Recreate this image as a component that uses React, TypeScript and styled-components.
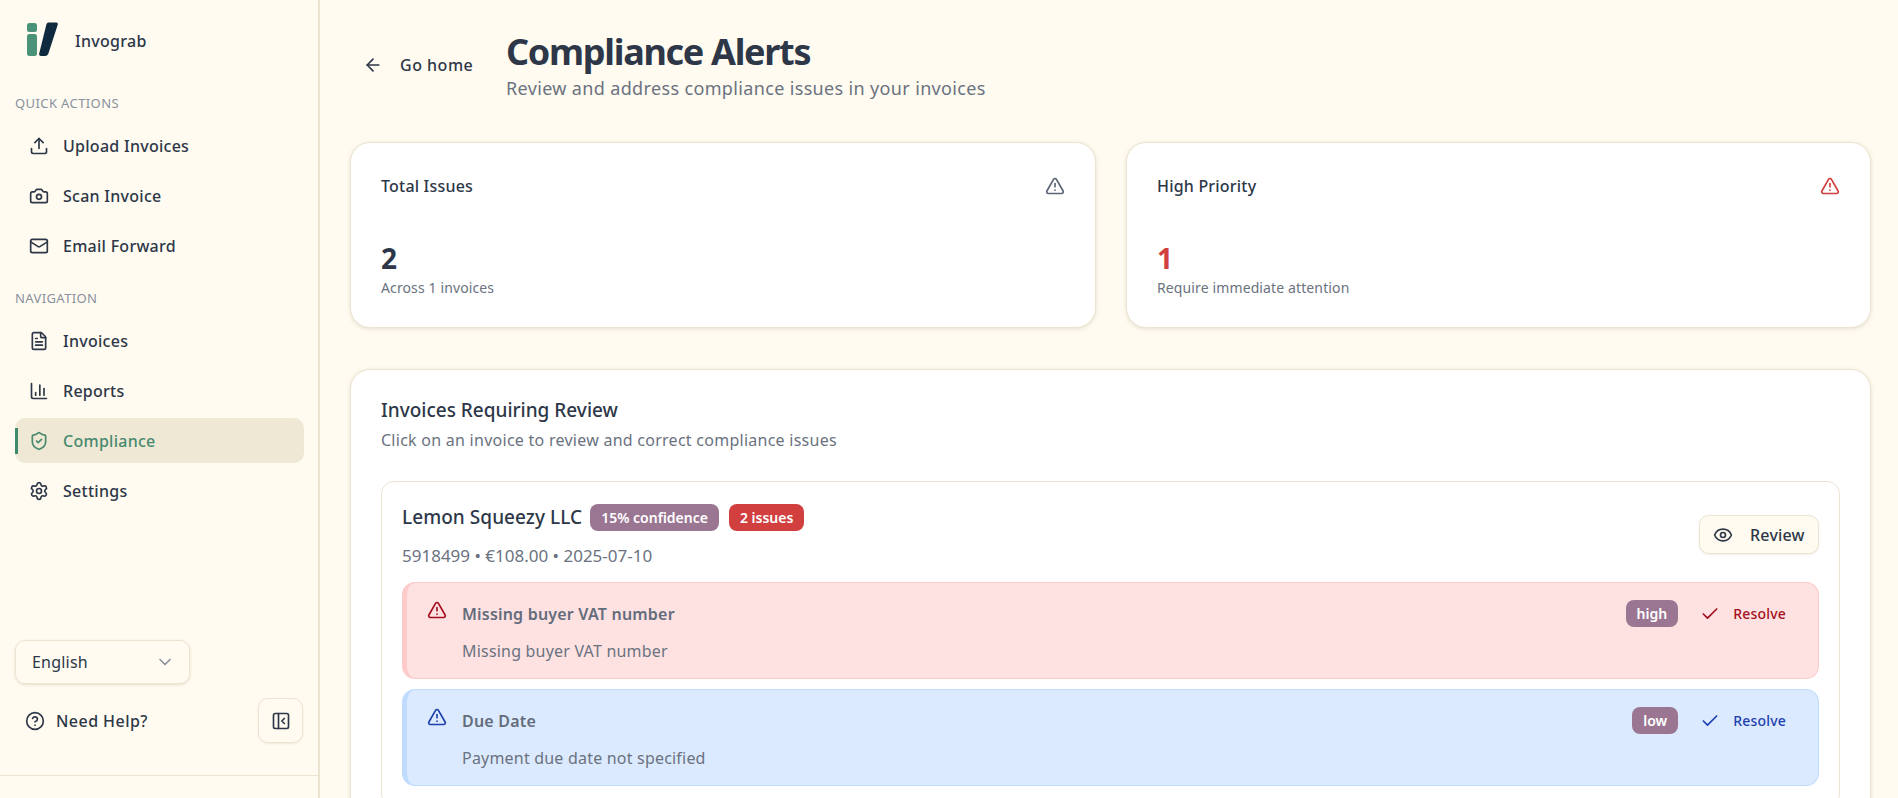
import React from "react";
import styled, { createGlobalStyle } from "styled-components";
import {
  Upload, Camera, Mail, FileText, ChartColumn, ShieldCheck, Settings, ChevronDown,
  CircleHelp, PanelLeftClose, ArrowLeft, TriangleAlert, Eye, Check,
} from "lucide-react";

const Global = createGlobalStyle`
  html, body { margin: 0; padding: 0; height: 100%; overflow: hidden; }
  body { background: #fffbf0; color: #2d3748; font-family: "Noto Sans", "Open Sans", sans-serif; letter-spacing: 0.2px; }
  * { box-sizing: border-box; }
  button { font-family: inherit; letter-spacing: inherit; }
`;

const Page = styled.div`display: flex; height: 798px; overflow: hidden;`;

const Sidebar = styled.aside`
  width: 320px; flex: none; height: 798px; display: flex; flex-direction: column;
  border-right: 2px solid #ebe4d0;
`;
const Brand = styled.div`display: flex; gap: 16px; padding: 22px 0 0 27px; height: 94px; align-items: flex-start;`;
const BrandName = styled.span`font-size: 16px; font-weight: 500; line-height: 38px; letter-spacing: 0.3px;`;
const GroupLabel = styled.div`
  font-size: 13px; line-height: 18px; letter-spacing: 0.4px; color: #8a919e; text-transform: uppercase; padding-left: 15px; margin-bottom: 11px;
`;
const NavList = styled.nav`display: flex; flex-direction: column; gap: 5px; padding: 0 15px; margin-bottom: 21px;`;
const NavItem = styled.a<{ $active?: boolean }>`
  position: relative; height: 45px; width: 289px; display: flex; align-items: center; gap: 14px; padding-left: 14px;
  border-radius: 10px; font-size: 16px; font-weight: 500; letter-spacing: 0.27px;
  color: ${(p) => (p.$active ? "#48896f" : "#2d3748")};
  background: ${(p) => (p.$active ? "#efe8d5" : "transparent")};
  ${(p) => p.$active && `&::before { content: ""; position: absolute; left: 0; top: 10px; height: 26px; width: 3px; background: #3f8a6d; }`}
`;
const SideFoot = styled.div`margin-top: auto; padding: 0 15px; height: 158px; display: flex; flex-direction: column;`;
const LangSelect = styled.div`
  width: 175px; height: 44px; display: flex; align-items: center; justify-content: space-between; padding: 0 14px 0 16px;
  border: 1px solid #ebe4d0; border-radius: 10px; font-size: 16px; color: #2d3748;
  box-shadow: 0 1px 3px rgba(120, 105, 70, 0.2);
`;
const HelpRow = styled.div`display: flex; align-items: center; justify-content: space-between; margin-top: 14px;`;
const HelpLink = styled.a`display: flex; align-items: center; gap: 11px; padding-left: 10px; font-size: 16px; font-weight: 500; letter-spacing: 0.45px;`;
const Collapse = styled.button`
  width: 45px; height: 45px; display: flex; align-items: center; justify-content: center; background: transparent; padding: 0;
  color: #2d3748; border: 1px solid #ebe4d0; border-radius: 10px; box-shadow: 0 1px 2px rgba(120, 105, 70, 0.12);
`;
const SideRule = styled.div`height: 1px; background: #ebe4d0; margin: 32px -15px 0;`;

const Main = styled.main`flex: 1; min-width: 0; padding: 28px 27px 0 30px;`;
const Header = styled.header`display: flex; align-items: flex-start; height: 114px;`;
const BackButton = styled.button`
  flex: none; display: flex; align-items: center; gap: 17px; border: 0; background: none; height: 20px; margin: 27px 0 0 13px; padding: 0;
  color: #2d3748; font-size: 16px; font-weight: 500; width: 143px; letter-spacing: 0.5px;
`;
const Title = styled.h1`margin: 0; font-size: 36px; line-height: 48px; font-weight: 700; color: #2d3748; letter-spacing: -1.3px;`;
const Subtitle = styled.p`margin: 0; font-size: 18px; line-height: 24px; color: #6b7280; letter-spacing: 0.35px;`;
const Stats = styled.section`display: grid; grid-template-columns: 746px 745px; gap: 30px; margin-bottom: 41px;`;
const Card = styled.div`
  background: #fff; border: 1px solid #ebe4d0; border-radius: 20px;
  box-shadow: 0 1px 4px rgba(120, 105, 70, 0.18);
`;
const StatCard = styled(Card)`height: 186px; padding: 30px;`;
const StatTop = styled.div`display: flex; justify-content: space-between; align-items: center; height: 26px; margin-bottom: 42px;`;
const StatLabel = styled.span`font-size: 16px; font-weight: 500; color: #2d3748;`;
const StatValue = styled.div<{ $danger?: boolean }>`
  font-size: 28px; line-height: 34px; font-weight: 700; color: ${(p) => (p.$danger ? "#d23f3f" : "#2d3748")};
`;
const StatNote = styled.div`font-size: 14px; line-height: 20px; color: #6b7280; margin-top: 3px; letter-spacing: 0.12px;`;
const ListCard = styled(Card)`padding: 27px 30px 0; height: 600px;`;
const ListTitle = styled.h2`margin: 0; font-size: 19px; line-height: 26px; font-weight: 500; letter-spacing: 0;`;
const ListSub = styled.p`margin: 4px 0 28px; font-size: 16px; line-height: 26px; color: #6b7280; letter-spacing: 0.26px;`;
const InvoiceCard = styled.div`border: 1px solid #ebe4d0; border-radius: 13px; padding: 22px 20px 20px;`;
const InvoiceHead = styled.div`display: flex; justify-content: space-between; align-items: flex-start; margin-bottom: 14px;`;
const InvoiceTop = styled.div`display: flex; align-items: center; gap: 10px;`;
const InvoiceName = styled.span`font-size: 19px; line-height: 27px; font-weight: 500; letter-spacing: 0.05px; margin-right: -2px;`;
const Badge = styled.span<{ $tone: "purple" | "red" }>`
  height: 27px; display: inline-flex; align-items: center; padding: 0 11px; border-radius: 8px;
  font-size: 14px; font-weight: 600; color: #fff; white-space: nowrap; letter-spacing: 0;
  background: ${(p) => (p.$tone === "purple" ? "#9b7693" : "#d23f3f")};
`;
const InvoiceMeta = styled.div`font-size: 17px; line-height: 24px; color: #6b7280; margin-top: 13px; letter-spacing: 0;`;
const ReviewButton = styled.button`
  width: 120px; height: 39px; margin-top: 11px; display: flex; align-items: center; gap: 17px; padding: 0 0 0 13px;
  background: #fffbf0; border: 1px solid #ebe4d0; border-radius: 10px; color: #2d3748; font-size: 16px; font-weight: 500;
  box-shadow: 0 1px 2px rgba(120, 105, 70, 0.12);
`;
const Alerts = styled.div`display: flex; flex-direction: column; gap: 10px;`;
const tones = {
  red: { bg: "#fee2e2", line: "#fecaca", ink: "#a50f20" },
  blue: { bg: "#dbeafe", line: "#bfdbfe", ink: "#1e40af" },
};
const AlertBox = styled.div<{ $tone: "red" | "blue" }>`
  height: 97px; border-radius: 13px; border: 1px solid ${(p) => tones[p.$tone].line};
  border-left-width: 5px; background: ${(p) => tones[p.$tone].bg};
  padding: 17px 32px 0 20px; display: flex; gap: 15px;
  color: ${(p) => tones[p.$tone].ink};
`;
const AlertBody = styled.div`flex: 1; min-width: 0;`;
const AlertTop = styled.div`display: flex; justify-content: space-between; align-items: center; height: 27px;`;
const AlertTitle = styled.span`font-size: 16px; font-weight: 600; color: #636c7c;`;
const AlertDesc = styled.div`font-size: 16px; line-height: 24px; color: #6b7280; margin-top: 12px;`;
const AlertActions = styled.div`display: flex; align-items: center; gap: 22px;`;
const SmallBadge = styled.span`
  height: 27px; display: inline-flex; align-items: center; padding: 0 11px; border-radius: 8px;
  background: #9b7693; color: #fff; font-size: 14px; font-weight: 600; letter-spacing: 0;
`;
const ResolveButton = styled.button`
  display: flex; align-items: center; gap: 13px; border: 0; background: none; padding: 0;
  color: inherit; font-size: 14px; font-weight: 500;
`;
const AlertGlyph = styled.span`flex: none; height: 20px;`;

function Logo() {
  return (
    <svg width="32" height="35" viewBox="0 0 32 35" fill="none">
      <rect x="0" y="1" width="10" height="9" rx="2.5" fill="#4a9278" />
      <rect x="0" y="12" width="10" height="22" rx="2.5" fill="#4a9278" />
      <path d="M19.5 2c.4-1 1.2-1.6 2.3-1.6h7.4c1.3 0 2 1 1.6 2.2L21.4 31.5c-.6 1.6-1.6 2.5-3.2 2.5H14c-1.4 0-2.2-1-1.8-2.4L19.5 2z" fill="#0f2a3f" />
    </svg>
  );
}

const quick = [
  { label: "Upload Invoices", Icon: Upload },
  { label: "Scan Invoice", Icon: Camera },
  { label: "Email Forward", Icon: Mail },
];
const nav = [
  { label: "Invoices", Icon: FileText },
  { label: "Reports", Icon: ChartColumn },
  { label: "Compliance", Icon: ShieldCheck, active: true },
  { label: "Settings", Icon: Settings },
];
const alerts = [
  { tone: "red" as const, title: "Missing buyer VAT number", desc: "Missing buyer VAT number", level: "high" },
  { tone: "blue" as const, title: "Due Date", desc: "Payment due date not specified", level: "low" },
];

export default function App() {
  return (
    <Page>
      <Global />
      <Sidebar>
        <Brand>
          <Logo />
          <BrandName>Invograb</BrandName>
        </Brand>
        <GroupLabel>Quick Actions</GroupLabel>
        <NavList>
          {quick.map(({ label, Icon }) => (
            <NavItem key={label}><Icon size={20} />{label}</NavItem>
          ))}
        </NavList>
        <GroupLabel>Navigation</GroupLabel>
        <NavList>
          {nav.map(({ label, Icon, active }) => (
            <NavItem key={label} $active={active}><Icon size={20} />{label}</NavItem>
          ))}
        </NavList>
        <SideFoot>
          <LangSelect>English<ChevronDown size={20} color="#8a919e" /></LangSelect>
          <HelpRow>
            <HelpLink><CircleHelp size={20} />Need Help?</HelpLink>
            <Collapse aria-label="Collapse"><PanelLeftClose size={20} /></Collapse>
          </HelpRow>
          <SideRule />
        </SideFoot>
      </Sidebar>
      <Main>
        <Header>
          <BackButton><ArrowLeft size={20} />Go home</BackButton>
          <div>
            <Title>Compliance Alerts</Title>
            <Subtitle>Review and address compliance issues in your invoices</Subtitle>
          </div>
        </Header>
        <Stats>
          <StatCard>
            <StatTop><StatLabel>Total Issues</StatLabel><TriangleAlert size={20} color="#5b6475" /></StatTop>
            <StatValue>2</StatValue>
            <StatNote>Across 1 invoices</StatNote>
          </StatCard>
          <StatCard>
            <StatTop><StatLabel>High Priority</StatLabel><TriangleAlert size={20} color="#d23f3f" /></StatTop>
            <StatValue $danger>1</StatValue>
            <StatNote>Require immediate attention</StatNote>
          </StatCard>
        </Stats>
        <ListCard>
          <ListTitle>Invoices Requiring Review</ListTitle>
          <ListSub>Click on an invoice to review and correct compliance issues</ListSub>
          <InvoiceCard>
            <InvoiceHead>
              <div>
                <InvoiceTop>
                  <InvoiceName>Lemon Squeezy LLC</InvoiceName>
                  <Badge $tone="purple">15% confidence</Badge>
                  <Badge $tone="red">2 issues</Badge>
                </InvoiceTop>
                <InvoiceMeta>5918499 • €108.00 • 2025-07-10</InvoiceMeta>
              </div>
              <ReviewButton><Eye size={20} />Review</ReviewButton>
            </InvoiceHead>
            <Alerts>
              {alerts.map((a) => (
                <AlertBox key={a.title} $tone={a.tone}>
                  <AlertGlyph><TriangleAlert size={20} /></AlertGlyph>
                  <AlertBody>
                    <AlertTop>
                      <AlertTitle>{a.title}</AlertTitle>
                      <AlertActions>
                        <SmallBadge>{a.level}</SmallBadge>
                        <ResolveButton><Check size={20} />Resolve</ResolveButton>
                      </AlertActions>
                    </AlertTop>
                    <AlertDesc>{a.desc}</AlertDesc>
                  </AlertBody>
                </AlertBox>
              ))}
            </Alerts>
          </InvoiceCard>
        </ListCard>
      </Main>
    </Page>
  );
}
